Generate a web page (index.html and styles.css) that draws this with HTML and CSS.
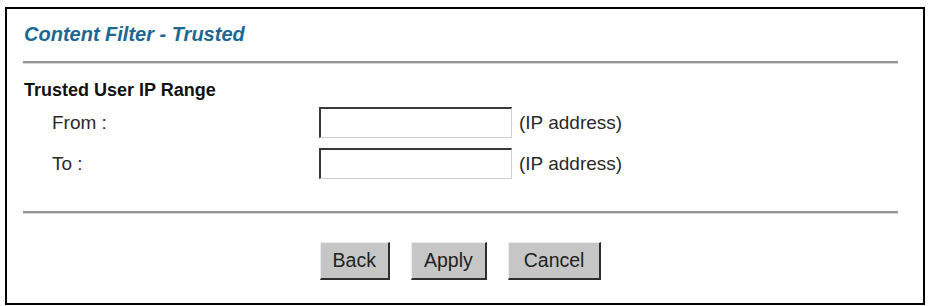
FILE: index.html
```html
<!DOCTYPE html>
<html>
<head>
<meta charset="utf-8">
<title>Content Filter - Trusted</title>
<link rel="stylesheet" href="styles.css">
</head>
<body>
<div class="frame">
  <div class="title">Content Filter - Trusted</div>
  <div class="rule"></div>
  <div class="section-head">Trusted User IP Range</div>
  <div class="form-grid">
    <label class="label" for="from">From :</label>
    <input class="ip-input" id="from" type="text">
    <span class="hint">(IP address)</span>
    <label class="label" for="to">To :</label>
    <input class="ip-input" id="to" type="text">
    <span class="hint">(IP address)</span>
  </div>
  <div class="rule rule-bottom"></div>
  <div class="buttons">
    <button class="btn" type="button">Back</button>
    <button class="btn" type="button">Apply</button>
    <button class="btn btn-wide" type="button">Cancel</button>
  </div>
</div>
</body>
</html>
```
FILE: styles.css
```css
html, body {
  margin: 0;
  padding: 0;
  background: #ffffff;
}

body {
  font-family: "Liberation Sans", Arial, sans-serif;
  color: #222222;
}

.frame {
  box-sizing: border-box;
  width: 920px;
  height: 298px;
  margin: 7px 0 0 5px;
  border: 2px solid #000000;
  padding: 0 25px 0 16px;
}

.title {
  margin-top: 14px;
  padding-left: 1px;
  font-size: 20px;
  line-height: 23px;
  font-weight: bold;
  font-style: italic;
  color: #1c6894;
}

.rule {
  height: 2px;
  margin-top: 15px;
  background: #959595;
  box-shadow: 0 1px 0 #d6d6d6;
}

.section-head {
  margin-top: 17px;
  padding-left: 1px;
  font-size: 18px;
  line-height: 21px;
  font-weight: bold;
  color: #111111;
}

.form-grid {
  display: grid;
  grid-template-columns: 289px 193px auto;
  column-gap: 7px;
  row-gap: 10px;
  align-items: center;
  margin-top: 6px;
}

.label {
  padding-left: 29px;
  font-size: 19px;
  color: #2a2a2a;
}

.ip-input {
  box-sizing: border-box;
  width: 193px;
  height: 31px;
  margin: 0;
  padding: 0 4px;
  background: #ffffff;
  border-top: 2px solid #3a3a3a;
  border-left: 2px solid #3a3a3a;
  border-right: 1px solid #cfcfcf;
  border-bottom: 1px solid #cfcfcf;
  font-family: "Liberation Sans", Arial, sans-serif;
  font-size: 16px;
}

.hint {
  font-size: 19px;
  color: #2a2a2a;
}

.rule-bottom {
  margin-top: 32px;
}

.buttons {
  display: flex;
  justify-content: center;
  gap: 21px;
  margin-top: 29px;
}

.btn {
  box-sizing: border-box;
  height: 38px;
  padding: 0 12px;
  margin: 0;
  background: #c6c6c6;
  border-top: 1px solid #ececec;
  border-left: 1px solid #ececec;
  border-right: 2px solid #2e2e2e;
  border-bottom: 2px solid #2e2e2e;
  border-radius: 0;
  font-family: "Liberation Sans", Arial, sans-serif;
  font-size: 19.5px;
  color: #222222;
}

.btn-wide {
  padding: 0 15px;
}
```
